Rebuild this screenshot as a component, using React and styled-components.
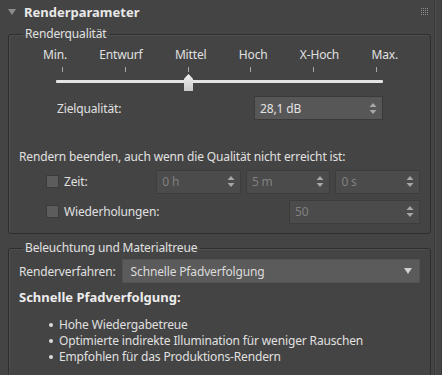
import styled, { createGlobalStyle } from 'styled-components'

const Global = createGlobalStyle`
  html, body {
    margin: 0;
    padding: 0;
    background: #444444;
  }
  body {
    font-family: "Noto Sans", "DejaVu Sans", sans-serif;
    font-size: 12px;
    letter-spacing: -0.15px;
    color: #e0e0e0;
  }
`

const Page = styled.div`
  display: flex;
  width: 442px;
  height: 375px;
  overflow: hidden;
`

const Panel = styled.div`
  width: 435px;
  border-right: 1px solid #393939;
  box-sizing: border-box;
`

const Gutter = styled.div`
  flex: 1;
  border-left: 1px solid #4c4c4c;
  border-right: 1px solid #3a3a3a;
`

const Header = styled.div`
  height: 24px;
  display: flex;
  align-items: center;
  padding: 0 5px 0 8px;
  h1 {
    margin: 0 0 0 8px;
    font-size: 13px;
    font-weight: 700;
    letter-spacing: 0;
    color: #e8e8e8;
    flex: 1;
  }
`

const Group = styled.fieldset`
  margin: ${p => p.$top || 0}px 3px 0 8px;
  padding: 0 10px ${p => p.$bottom || 0}px 10px;
  border: 1px solid #2e2e2e;
  border-radius: 3px;
  box-shadow: inset 1px 1px 0 #4f4f4f;
  min-width: 0;
  legend {
    padding: 0 3px 0 2px;
    margin-left: 4px;
    line-height: 16px;
    color: #e0e0e0;
  }
`

const Slider = styled.div`
  padding-top: 5px;
  position: relative;
`

const Labels = styled.div`
  display: flex;
  justify-content: space-between;
  margin: 0 22px 0 24px;
  line-height: 16px;
`

const Ticks = styled.div`
  display: flex;
  justify-content: space-between;
  margin: 4px 43px 0 43px;
  height: 5px;
  span {
    width: 1px;
    background: #a8a8a8;
  }
`

const Track = styled.div`
  margin: 8px 37px 0 37px;
  height: 3px;
  background: #e4e4e4;
  border-radius: 1px;
`

const Thumb = styled.div`
  position: absolute;
  left: ${p => p.$x}px;
  top: 32px;
  width: 9px;
  height: 17px;
  background: linear-gradient(#f2f2f2, #c8c8c8);
  clip-path: polygon(50% 0, 100% 28%, 100% 100%, 0 100%, 0 28%);
`

const Row = styled.div`
  display: flex;
  align-items: center;
  height: ${p => p.$h || 24}px;
  margin-top: ${p => p.$mt || 0}px;
  padding-left: ${p => p.$pl || 0}px;
  padding-right: ${p => p.$pr || 0}px;
  gap: ${p => p.$gap || 0}px;
`

const Spin = styled.div`
  box-sizing: border-box;
  width: ${p => p.$w}px;
  height: 24px;
  margin-left: ${p => (p.$auto ? 'auto' : '0')};
  display: flex;
  align-items: center;
  justify-content: space-between;
  padding: 0 5px 0 5px;
  background: ${p => (p.$off ? '#4b4b4b' : '#575757')};
  border: 1px solid ${p => (p.$off ? '#3d3d3d' : '#3a3a3a')};
  color: ${p => (p.$off ? '#808080' : '#e2e2e2')};
`

const Check = styled.label`
  display: flex;
  align-items: center;
  gap: 5px;
  width: ${p => p.$w}px;
  span.box {
    width: 11px;
    height: 11px;
    background: #5c5c5c;
    border: 1px solid #3b3b3b;
  }
`

const Select = styled.div`
  box-sizing: border-box;
  flex: 1;
  height: 24px;
  display: flex;
  align-items: center;
  justify-content: space-between;
  padding: 0 7px 0 8px;
  background: #5b5b5b;
  border: 1px solid #525252;
  color: #dcdcdc;
`

const Heading = styled.div`
  font-weight: 700;
  font-size: 13px;
  letter-spacing: 0;
  line-height: 16px;
  margin-top: 6px;
  color: #ececec;
`

const Bullets = styled.ul`
  list-style: none;
  margin: 12px 0 0 0;
  padding: 0 0 0 30px;
  line-height: 16px;
  li {
    display: flex;
    align-items: center;
    gap: 6px;
  }
  li::before {
    content: '';
    width: 4px;
    height: 4px;
    border-radius: 50%;
    background: #dcdcdc;
  }
`

function Grip() {
  const dots = []
  for (let r = 0; r < 4; r++) {
    for (let c = 0; c < 4; c++) {
      dots.push(<rect key={r * 4 + c} x={c * 2} y={r * 2} width="1" height="1" fill="#8c8c8c" />)
    }
  }
  return (
    <svg width="8" height="8" viewBox="0 0 8 8">
      {dots}
    </svg>
  )
}

function Arrows() {
  return (
    <svg width="8" height="13" viewBox="0 0 8 13">
      <path d="M4 1 L7.5 5 L0.5 5 Z" fill="#a6a6a6" />
      <path d="M0.5 8 L7.5 8 L4 12 Z" fill="#a6a6a6" />
    </svg>
  )
}

function Spinner({ value, w, off, auto }) {
  return (
    <Spin $w={w} $off={off} $auto={auto}>
      <span>{value}</span>
      <Arrows />
    </Spin>
  )
}

const levels = ['Min.', 'Entwurf', 'Mittel', 'Hoch', 'X-Hoch', 'Max.']

export default function App() {
  return (
    <Page>
      <Global />
      <Panel>
        <Header>
          <svg width="8" height="6" viewBox="0 0 8 6">
            <path d="M0 0 L8 0 L4 6 Z" fill="#8c8c8c" />
          </svg>
          <h1>Renderparameter</h1>
          <Grip />
        </Header>

        <Group $top={2} $bottom={9}>
          <legend>Renderqualität</legend>
          <Slider>
            <Labels>
              {levels.map(l => <span key={l}>{l}</span>)}
            </Labels>
            <Ticks>
              {levels.map(l => <span key={l} />)}
            </Ticks>
            <Track />
            <Thumb $x={165} />
          </Slider>
          <Row $mt={13} $pl={38} $pr={37}>
            <span>Zielqualität:</span>
            <Spinner value="28,1 dB" w={129} auto />
          </Row>
          <Row $mt={28} $h={16}>
            Rendern beenden, auch wenn die Qualität nicht erreicht ist:
          </Row>
          <Row $mt={5} $h={25} $pl={27} $gap={5}>
            <Check $w={106}><span className="box" />Zeit:</Check>
            <Spinner value="0 h" w={85} off />
            <Spinner value="5 m" w={85} off />
            <Spinner value="0 s" w={85} off />
          </Row>
          <Row $mt={5} $h={25} $pl={27}>
            <Check $w={140}><span className="box" />Wiederholungen:</Check>
            <Spinner value="50" w={131} off auto />
          </Row>
        </Group>

        <Group $top={6} $bottom={20}>
          <legend>Beleuchtung und Materialtreue</legend>
          <Row $mt={3} $gap={6}>
            <span>Renderverfahren:</span>
            <Select>
              <span>Schnelle Pfadverfolgung</span>
              <svg width="8" height="6" viewBox="0 0 8 6">
                <path d="M0 0 L8 0 L4 6 Z" fill="#d0d0d0" />
              </svg>
            </Select>
          </Row>
          <Heading>Schnelle Pfadverfolgung:</Heading>
          <Bullets>
            <li>Hohe Wiedergabetreue</li>
            <li>Optimierte indirekte Illumination für weniger Rauschen</li>
            <li>Empfohlen für das Produktions-Rendern</li>
          </Bullets>
        </Group>
      </Panel>
      <Gutter />
    </Page>
  )
}
